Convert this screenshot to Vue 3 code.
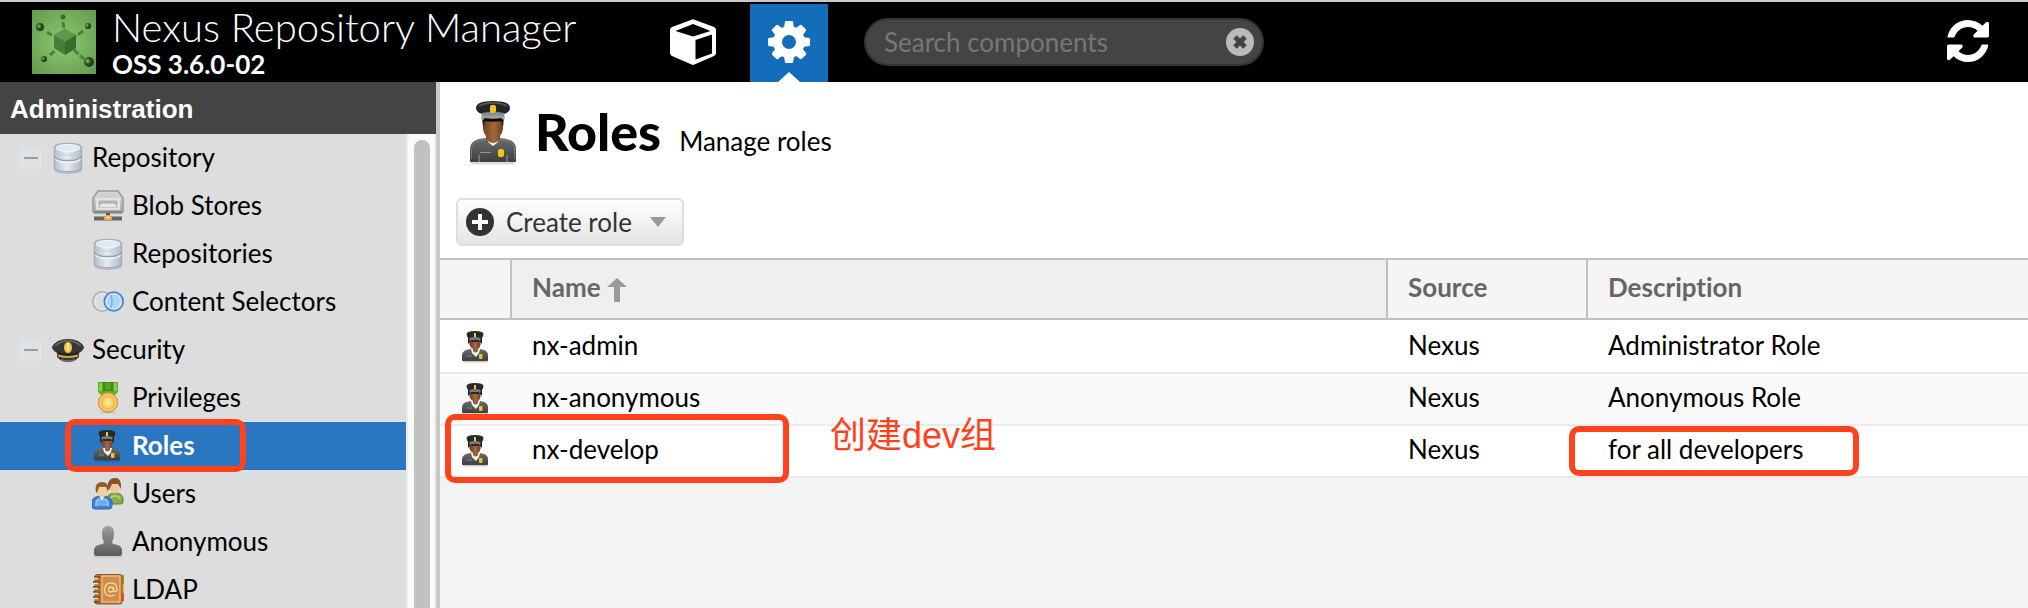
<script setup>
import { ref } from 'vue'

const query = ref('')
const nodes = [
  { label: 'Repository', icon: 'database', group: true },
  { label: 'Blob Stores', icon: 'drive' },
  { label: 'Repositories', icon: 'database' },
  { label: 'Content Selectors', icon: 'selectors' },
  { label: 'Security', icon: 'cap', group: true },
  { label: 'Privileges', icon: 'medal' },
  { label: 'Roles', icon: 'officer', selected: true },
  { label: 'Users', icon: 'users' },
  { label: 'Anonymous', icon: 'person' },
  { label: 'LDAP', icon: 'book' }
]
const roles = [
  { name: 'nx-admin', source: 'Nexus', description: 'Administrator Role' },
  { name: 'nx-anonymous', source: 'Nexus', description: 'Anonymous Role' },
  { name: 'nx-develop', source: 'Nexus', description: 'for all developers', marked: true }
]
</script>

<template>
  <svg class="defs" aria-hidden="true">
    <defs>
      <linearGradient id="g-metal" x1="0" x2="1" y1="0" y2="0">
        <stop offset="0" stop-color="#b4c0ca" /><stop offset=".45" stop-color="#e6ebf5" /><stop offset="1" stop-color="#aebbc4" />
      </linearGradient>
      <linearGradient id="g-drive" x1="0" x2="0" y1="0" y2="1">
        <stop offset="0" stop-color="#e2e2e2" /><stop offset="1" stop-color="#a8a8a8" />
      </linearGradient>
      <linearGradient id="g-uniform" x1="0" x2="0" y1="0" y2="1">
        <stop offset="0" stop-color="#6b6c6e" /><stop offset="1" stop-color="#3d3e40" />
      </linearGradient>
      <linearGradient id="g-person" x1="0" x2="0" y1="0" y2="1">
        <stop offset="0" stop-color="#9b9c9e" /><stop offset="1" stop-color="#5a5b5d" />
      </linearGradient>
      <linearGradient id="g-skin" x1="0" x2="1" y1="0" y2="0">
        <stop offset="0" stop-color="#6e4020" /><stop offset=".55" stop-color="#a5683e" /><stop offset="1" stop-color="#6a3d20" />
      </linearGradient>
      <linearGradient id="g-visor" x1="0" x2="0" y1="0" y2="1">
        <stop offset="0" stop-color="#77797c" /><stop offset="1" stop-color="#b5b7ba" />
      </linearGradient>
      <radialGradient id="g-gold" cx=".5" cy=".5" r=".6">
        <stop offset="0" stop-color="#fff0a0" /><stop offset="1" stop-color="#f2bd4a" />
      </radialGradient>
      <radialGradient id="g-logo" cx=".5" cy=".5" r=".7">
        <stop offset="0" stop-color="#8ecb70" /><stop offset="1" stop-color="#629a4c" />
      </radialGradient>
      <radialGradient id="g-ball" cx=".35" cy=".4" r=".6">
        <stop offset="0" stop-color="#9db58f" /><stop offset=".5" stop-color="#2f5528" /><stop offset="1" stop-color="#1d3b18" />
      </radialGradient>
    </defs>
    <symbol id="i-database" viewBox="0 0 32 32">
      <path d="M2.500 5.500Q3 1.500 16 1.500T29.500 5.500V27Q29 31 16 31T2.500 27Z" fill="url(#g-metal)" stroke="#a3b0ba" stroke-width="1.500" />
      <ellipse cx="16" cy="6" rx="12" ry="3.600" fill="#e2eaf1" stroke="#f4f7fa" />
      <path d="M3 15q2 3.500 13 3.500T29 15" fill="none" stroke="#93a2ae" stroke-width="1.500" />
      <path d="M3.500 17q2 3.500 12.500 3.500T28.500 17" fill="none" stroke="#f2f6fa" stroke-width="1.500" />
      <path d="M4 10q2 3 12 3t12-3" fill="none" stroke="#c2cdd6" />
      <path d="M4 27q3 2.500 12 2.500T28 27" fill="none" stroke="#9ba9b3" />
    </symbol>
    <symbol id="i-drive" viewBox="0 0 32 32">
      <path d="M6 1h20l5 7v13q0 2-2 2H3q-2 0-2-2V8Z" fill="url(#g-drive)" stroke="#969696" stroke-width="1.500" />
      <path d="M6.500 2.500h19l3.500 5H3Z" fill="#d0d0d0" />
      <path d="M5 9h22v10H5Z" fill="#cfcfcf" stroke="#ececec" stroke-width="1.500" />
      <path d="M8 16v-4h16v4" fill="none" stroke="#a8a8a8" stroke-width="1.500" />
      <path d="M8 15.500h16" stroke="#f4f4f4" stroke-width="1.500" />
      <path d="M2 22h28" stroke="#868686" stroke-width="2" />
      <path d="M2 28.500h28" stroke="#666" stroke-width="4" />
      <path d="M14 23h4v2h-4Z" fill="#555" />
      <path d="M14 25h4l2 2v3h-8v-3Z" fill="#eaa13e" />
      <path d="M14 27.500h4" stroke="#ffe39a" stroke-width="2" />
    </symbol>
    <symbol id="i-selectors" viewBox="0 0 32 32">
      <circle cx="10.500" cy="15.500" r="9.700" fill="#dcdcdc" stroke="#b0b0b0" stroke-width="1.600" />
      <circle cx="10.500" cy="15.500" r="7.700" fill="none" stroke="#efefef" />
      <circle cx="21.700" cy="15.500" r="9.400" fill="#aed5f5" stroke="#4a88c2" stroke-width="1.800" />
      <circle cx="21.700" cy="15.500" r="7.500" fill="none" stroke="#d6ebfb" stroke-width="1.200" />
      <path d="M18.500 9q3 6.500 0 13" fill="none" stroke="#7aaedb" stroke-width="1.500" />
    </symbol>
    <symbol id="i-cap" viewBox="0 0 32 32">
      <path d="M0 13Q4 5 16 5t16 8q0 3-5 6v4q-4 5-11 5T5 23v-4Q0 16 0 13Z" fill="#37373a" />
      <path d="M3 12Q8 7 16 7t13 5" fill="none" stroke="#6d6d70" stroke-width="1.500" />
      <path d="M6 18q10 4 20 0v4q-10 4-20 0Z" fill="#1e1e20" />
      <path d="M6 21.500q10 3 20 0" fill="none" stroke="#d3a93b" stroke-width="2.200" />
      <path d="M9 26q7 2 14 0" stroke="#77777a" stroke-width="1.500" fill="none" />
      <ellipse cx="16" cy="13.500" rx="4" ry="5.500" fill="#edc53e" />
      <path d="M16 9v8" stroke="#ffe98a" stroke-width="2" />
    </symbol>
    <symbol id="i-medal" viewBox="0 0 32 32">
      <path d="M6 0h20v10l-5 5H11l-5-5Z" fill="#62ab27" />
      <path d="M11 0h10v9H11Z" fill="#3f8a12" /><path d="M13 1h6v7h-6Z" fill="#57a123" />
      <path d="M7 1h3v8H7zM22 1h3v8h-3z" fill="#86c94e" />
      <circle cx="16" cy="20.500" r="9.500" fill="#f7d26b" stroke="#e29d43" stroke-width="1.500" />
      <circle cx="16" cy="20.500" r="6.500" fill="url(#g-gold)" stroke="#f0b84d" stroke-width="1.500" />
      <path d="M8 30.500h16" stroke="#000" stroke-opacity=".12" stroke-width="1.500" />
    </symbol>
    <symbol id="i-officer" viewBox="0 0 48 64">
      <path d="M2 61h44v2.500H2Z" fill="#000" opacity=".14" />
      <path d="M1 60V48q0-10 16-11h14q16 1 16 11v12q0 1-1 1H2q-1 0-1-1Z" fill="url(#g-uniform)" />
      <path d="M2.500 58V48q0-8 14-9.500M45.500 58V48q0-8-14-9.500" fill="none" stroke="#88898b" stroke-opacity=".7" />
      <path d="M17 37h14l-3 5-4 3-4-3Z" fill="#f1f1f1" />
      <path d="M14 18h20v10q-1 5-3 7v3q-7 8-14 0v-3q-2-2-3-7Z" fill="url(#g-skin)" />
      <path d="M13 16h22l-1 10-2-6H16l-2 6Z" fill="#17181a" />
      <path d="M7 7Q7 0 24 0t17 7q0 4-6 6H13Q7 11 7 7Z" fill="#242528" />
      <path d="M10 5Q15 2 24 2t14 3" fill="none" stroke="#595a5d" stroke-width="1.500" />
      <path d="M13 12q11-3 22 0l1 6q-12 3-24 0Z" fill="url(#g-visor)" />
      <path d="M15 18.500q9 1.500 18 0" stroke="#0c0d0e" stroke-width="3" fill="none" />
      <rect x="21" y="4" width="6" height="8" rx="2" fill="#f5c51c" />
      <rect x="29" y="48" width="6" height="8" rx="2" fill="#f5c51c" />
      <path d="M11 51.500h11M10 54v7M38 54v7" stroke="#929395" stroke-width="1.200" />
    </symbol>
    <symbol id="i-officer-small" viewBox="0 0 32 32">
      <path d="M3 30h25v1.500H3Z" fill="#000" opacity=".2" />
      <path d="M2 29v-5q0-5 9-6h9q8 1 8 6v5q0 1-1 1H3q-1 0-1-1Z" fill="url(#g-uniform)" />
      <path d="M11 18h9l-1 4-3 4-4-4Z" fill="#f6f6f6" />
      <path d="M9.500 8h11v6q-1 3-2.500 4v2q-2.500 3-5 0v-2q-2-1-3.500-4Z" fill="url(#g-skin)" />
      <path d="M8 6h14v7l-2-2v-3H10v3l-2 2Z" fill="#202123" />
      <path d="M6.500 3Q7 0 15 0t8.500 3q0 3-3 5H9.500Q6.500 6 6.500 3Z" fill="#28292b" />
      <path d="M9.500 7q5.500-2 11 0v2.500h-11Z" fill="#777b80" />
      <path d="M11 10h8" stroke="#101114" stroke-width="1.500" />
      <path d="M14 2h2v4h-2z" fill="#f5cb20" />
      <rect x="19" y="23" width="3.500" height="5" rx="1" fill="#f0c423" />
      <path d="M7 25h5" stroke="#88898b" />
    </symbol>
    <symbol id="i-users" viewBox="0 0 32 32">
      <path d="M15 26v-5q0-6 8-6t8 6v3q0 2-3 2Z" fill="#84ad48" stroke="#5c852a" />
      <path d="M18 22q1-4 5-4t5 3" fill="none" stroke="#b9d585" stroke-width="1.500" />
      <ellipse cx="22.500" cy="9" rx="5" ry="6.500" fill="#eec89a" />
      <path d="M16 10q-1-9 6-10t7 8v3l-3-5h-6l-3 6Z" fill="#875225" />
      <path d="M0 28v-4q0-6 10-6t10 6v4q0 3-3 3H3q-3 0-3-3Z" fill="#3f83d2" stroke="#2866b2" />
      <path d="M4 28v-3q0-3 4-4h4q4 1 4 4v3" fill="#6facec" stroke="#9ccaf5" stroke-width="1.500" />
      <ellipse cx="10" cy="13" rx="5" ry="6.500" fill="#f3d0a2" />
      <path d="M4 14q-2-10 6-10t6 10l-2-5H7l-2 6Z" fill="#905929" />
      <path d="M8 19h4l-2 3Z" fill="#fff" />
    </symbol>
    <symbol id="i-person" viewBox="0 0 32 32">
      <path d="M2 28v-4q0-5 9-6l1-2q-2-3-2-9 0-7 6-7t6 7q0 6-2 9l1 2q9 1 9 6v4q0 2-2 2H4q-2 0-2-2Z" fill="url(#g-person)" />
      <path d="M12 5q1-4 4-4t4 4" fill="none" stroke="#b0b1b3" stroke-opacity=".6" />
      <path d="M3 31h26" stroke="#000" stroke-opacity=".15" />
    </symbol>
    <symbol id="i-book" viewBox="0 0 32 32">
      <path d="M28 1h4v9h-4z" fill="#7ba232" /><path d="M28 10h4v9h-4z" fill="#f0b13b" /><path d="M28 19h4v8h-4z" fill="#e65a26" />
      <rect x="3" y="0.500" width="27" height="29.500" rx="2" fill="#c0732e" stroke="#9a561f" />
      <rect x="10" y="2" width="18" height="26" fill="#d08d49" stroke="#f1c993" stroke-width="1.200" />
      <path d="M2 3h6M1 8h7M1 13h7M1 18h7M1 23h7M2 28h6" stroke="#7b5534" stroke-width="2" />
      <path d="M1 4.500h5M1 9.500h5M1 14.500h5M1 19.500h5M1 24.500h5" stroke="#e8ded2" stroke-width="1.300" />
      <circle cx="19" cy="15.500" r="2.500" fill="none" stroke="#f8d4a0" stroke-width="1.300" />
      <path d="M21.500 13v4q2.500 1.500 3.500-1.500 0-6.500-6-6.500t-6.500 6.500q0 6.500 6.500 6.500 2 0 4-1" fill="none" stroke="#f8d4a0" stroke-width="1.300" />
    </symbol>
  </svg>

  <div class="app">
    <header class="topbar">
      <div class="brand">
        <svg class="logo" viewBox="0 0 64 64" aria-hidden="true">
          <rect width="64" height="64" fill="url(#g-logo)" />
          <path d="M31 12l1 7M15 22l6 4M51 21l-7 5M18 45l6-5M42 40l10 9" stroke="#44753a" stroke-opacity=".85" stroke-width="3" stroke-dasharray="6 2" />
          <path d="M33 19l11 6v13l-11 7-11-7V25Z" fill="#457c38" />
          <path d="M33 19l11 6-11 7-11-7Z" fill="#5c9a4b" />
          <path d="M33 32l11-7v13l-11 7Z" fill="#3a6b31" />
          <circle cx="31" cy="7" r="2.500" fill="#3c6434" />
          <circle cx="8" cy="17" r="4" fill="url(#g-ball)" />
          <circle cx="56" cy="16" r="3" fill="url(#g-ball)" />
          <circle cx="12" cy="49" r="3" fill="url(#g-ball)" />
          <circle cx="57" cy="52" r="5" fill="url(#g-ball)" />
        </svg>
        <div class="product">
          <div class="product-name">Nexus Repository Manager</div>
          <div class="version">OSS 3.6.0-02</div>
        </div>
      </div>
      <nav class="modes">
        <button class="mode" type="button" aria-label="Browse">
          <svg class="cube" viewBox="0 0 46 46" aria-hidden="true">
            <path d="M21.500 0.700q1.500-.8 3 0L44 8q2 1 2 3v23q0 2-2 3L25 45.300q-2 1-4 0L2 37q-2-1-2-3V11q0-2 2-3Z" fill="#fff" />
            <path d="M23 5l17.500 7L23 17.500 5.500 12ZM25.500 21L42 15.500V34.500L25.500 40.500Z" fill="#000" />
          </svg>
        </button>
        <button class="mode active" type="button" aria-label="Administration">
          <svg class="glyph" viewBox="128 128 1536 1536" aria-hidden="true">
            <path fill="#fff" d="M1152 896q0-106-75-181t-181-75-181 75-75 181 75 181 181 75 181-75 75-181zm512-109v222q0 12-8 23t-20 13l-185 28q-19 54-39 91 35 50 107 138 10 12 10 25t-9 23q-27 37-99 108t-94 71q-12 0-26-9l-138-108q-44 23-91 38-16 136-29 186-7 28-36 28h-222q-14 0-24.500-8.500t-11.500-21.500l-28-184q-49-16-90-37l-141 107q-10 9-25 9-14 0-25-11-126-114-165-168-7-10-7-23 0-12 8-23 15-21 51-66.500t54-70.500q-27-50-41-99l-183-27q-13-2-21-12.500t-8-23.500v-222q0-12 8-23t19-13l186-28q14-46 39-92-40-57-107-138-10-12-10-24 0-10 9-23 26-36 98.500-107.500t94.500-71.500q13 0 26 10l138 107q44-23 91-38 16-136 29-186 7-28 36-28h222q14 0 24.500 8.500t11.500 21.500l28 184q49 16 90 37l142-107q9-9 24-9 13 0 25 10 129 119 165 170 7 8 7 22 0 12-8 23-15 21-51 66.500t-54 70.500q26 50 41 98l183 28q13 2 21 12.500t8 23.500z" />
          </svg>
        </button>
      </nav>
      <div class="search">
        <input v-model="query" type="text" placeholder="Search components" aria-label="Search components" />
        <button class="clear" type="button" aria-label="Clear search" @click="query = ''">
          <svg viewBox="0 0 28 28" aria-hidden="true">
            <circle cx="14" cy="14" r="14" fill="#bababa" />
            <path d="M9 9l10 10M19 9L9 19" stroke="#444" stroke-width="5" />
          </svg>
        </button>
      </div>
      <button class="refresh" type="button" aria-label="Refresh">
        <svg class="glyph" viewBox="128 128 1536 1536" aria-hidden="true">
          <path fill="#fff" d="M1639 1056q0 5-1 7-64 268-268 434.500t-478 166.500q-146 0-282.500-55t-243.500-157l-129 129q-19 19-45 19t-45-19-19-45v-448q0-26 19-45t45-19h448q26 0 45 19t19 45-19 45l-137 137q71 66 161 102t187 36q134 0 250-65t186-179q11-17 53-117 8-23 30-23h192q13 0 22.500 9.500t9.500 22.500zm25-800v448q0 26-19 45t-45 19h-448q-26 0-45-19t-19-45 19-45l138-138q-148-137-349-137-134 0-250 65t-186 179q-11 17-53 117-8 23-30 23h-199q-13 0-22.500-9.500t-9.500-22.500v-7q65-268 270-434.500t480-166.500q146 0 284 55.500t245 156.500l130-129q19-19 45-19t45 19 19 45z" />
        </svg>
      </button>
    </header>

    <div class="body">
      <aside class="sidebar">
        <h2 class="sidebar-title">Administration</h2>
        <div class="tree-wrap">
          <ul class="tree">
            <li v-for="(node, i) in nodes" :key="i" class="node" :class="{ group: node.group, selected: node.selected }">
              <button v-if="node.group" class="toggle" type="button" :aria-label="'Collapse ' + node.label"></button>
              <svg class="icon" aria-hidden="true"><use :href="node.icon === 'officer' ? '#i-officer-small' : '#i-' + node.icon" /></svg>
              <a class="node-link" href="#">{{ node.label }}</a>
              <span v-if="node.selected" class="ring ring-node"></span>
            </li>
          </ul>
          <div class="track"><div class="thumb"></div></div>
        </div>
      </aside>

      <main class="content">
        <div class="heading">
          <svg class="officer" aria-hidden="true"><use href="#i-officer" /></svg>
          <h1>Roles</h1>
          <span class="subtitle">Manage roles</span>
        </div>
        <div class="toolbar">
          <button class="create" type="button">
            <svg class="plus" viewBox="0 0 28 28" aria-hidden="true">
              <circle cx="14" cy="14" r="14" fill="#333" />
              <path d="M14 6v16M6 14h16" stroke="#fff" stroke-width="4" />
            </svg>
            <span>Create role</span>
            <svg class="caret" viewBox="0 0 16 10" aria-hidden="true"><path d="M0 0h16L8 10Z" fill="#999" /></svg>
          </button>
        </div>
        <table class="grid">
          <colgroup><col class="c-icon" /><col /><col class="c-source" /><col class="c-desc" /></colgroup>
          <thead>
            <tr>
              <th aria-label="Type"></th>
              <th class="sorted">
                Name
                <svg class="sort" viewBox="0 0 20 24" aria-hidden="true"><path d="M10 0l10 9h-7v15H7V9H0Z" fill="#999" /></svg>
              </th>
              <th>Source</th>
              <th>Description</th>
            </tr>
          </thead>
          <tbody>
            <tr v-for="role in roles" :key="role.name">
              <td class="icon-cell">
                <svg class="icon" aria-hidden="true"><use href="#i-officer-small" /></svg>
                <span v-if="role.marked" class="ring ring-name"></span>
              </td>
              <td>{{ role.name }}<span v-if="role.marked" class="note">创建dev组</span></td>
              <td>{{ role.source }}</td>
              <td>{{ role.description }}<span v-if="role.marked" class="ring ring-desc"></span></td>
            </tr>
          </tbody>
        </table>
      </main>
    </div>
  </div>
</template>

<style>
body {
  margin: 0;
}
</style>

<style scoped>
.defs {
  position: absolute;
  width: 0;
  height: 0;
}
.app {
  display: flex;
  flex-direction: column;
  height: 100vh;
  overflow: hidden;
  font-family: Lato, "Liberation Sans", sans-serif;
  font-size: 26px;
  font-variant-ligatures: none;
  line-height: 32px;
  color: #000;
}
button {
  border: 0;
  padding: 0;
  background: none;
  font: inherit;
  cursor: pointer;
}
svg {
  display: block;
  flex: none;
}
.topbar {
  display: flex;
  align-items: stretch;
  flex: none;
  height: 80px;
  border-top: 2px solid #c6caca;
  background: #000;
  color: #fff;
}
.brand {
  display: flex;
  align-items: center;
  box-sizing: border-box;
  width: 654px;
  padding-left: 32px;
  gap: 16px;
}
.logo {
  width: 64px;
  height: 64px;
}
.product-name {
  font-size: 40px;
  line-height: 44px;
  font-weight: 300;
  white-space: nowrap;
}
.version {
  font-size: 26px;
  line-height: 30px;
  font-weight: 700;
}
.modes {
  display: flex;
  gap: 18px;
  padding-top: 2px;
}
.mode {
  position: relative;
  display: flex;
  align-items: center;
  justify-content: center;
  width: 78px;
  padding-bottom: 2px;
}
.mode.active {
  background: #136dbb;
}
.mode.active::after {
  content: "";
  position: absolute;
  left: 28px;
  bottom: 0;
  border: 11px solid transparent;
  border-top-width: 0;
  border-bottom: 10px solid #fff;
}
.cube {
  width: 46px;
  height: 46px;
}
.glyph {
  width: 42px;
  height: 42px;
}
.search {
  display: flex;
  align-items: center;
  align-self: center;
  box-sizing: border-box;
  width: 400px;
  height: 48px;
  margin-left: 36px;
  padding: 0 8px 0 18px;
  border: 2px solid #333;
  border-radius: 24px;
  background: #444;
}
.search input {
  flex: 1;
  min-width: 0;
  padding: 0;
  border: 0;
  outline: 0;
  background: none;
  color: #fff;
  font: inherit;
}
.search input::placeholder {
  color: #777;
  opacity: 1;
}
.clear svg {
  width: 28px;
  height: 28px;
}
.refresh {
  margin-left: auto;
  margin-right: 39px;
  padding-bottom: 2px;
}
.body {
  display: flex;
  flex: 1;
  min-height: 0;
}
.sidebar {
  display: flex;
  flex-direction: column;
  flex: none;
  width: 436px;
  border-right: 4px solid #c8c8c8;
}
.sidebar-title {
  flex: none;
  margin: 0;
  padding: 11px 10px 9px;
  background: #444;
  color: #fff;
  font: 700 26px/32px "Liberation Sans", sans-serif;
}
.tree-wrap {
  display: flex;
  flex: 1;
  min-height: 0;
  overflow: hidden;
}
.tree {
  flex: 1;
  margin: 0;
  padding: 0;
  list-style: none;
  background: #ddd;
}
.node {
  position: relative;
  display: flex;
  align-items: center;
  box-sizing: border-box;
  height: 48px;
  padding-left: 92px;
  gap: 8px;
}
.node.group {
  padding-left: 20px;
}
.node.selected {
  background: #2a76c0;
  font-weight: 700;
}
.node-link {
  padding-bottom: 2px;
  color: #000;
  text-decoration: none;
}
.selected .node-link {
  color: #fff;
}
.toggle {
  width: 22px;
  height: 22px;
  margin-right: 2px;
  background: linear-gradient(#9c9c9c, #9c9c9c) center / 14px 2px no-repeat #dde2e6;
}
.icon {
  width: 32px;
  height: 32px;
}
.track {
  box-sizing: border-box;
  width: 30px;
  padding: 6px 4px 0 6px;
  border: solid #ebebeb;
  border-width: 0 2px;
  background: #fafafa;
}
.thumb {
  width: 16px;
  height: 100%;
  border-radius: 8px 8px 0 0;
  background: #c1c1c1;
}
.content {
  flex: 1;
  min-width: 0;
  background: #f3f3f3;
}
.heading {
  display: flex;
  align-items: baseline;
  padding: 19px 0 0 29px;
  height: 96px;
  box-sizing: border-box;
  background: #fff;
}
.officer {
  width: 48px;
  height: 64px;
  align-self: flex-start;
}
h1 {
  margin: 0 18px 0 18px;
  font-size: 52px;
  line-height: 60px;
  font-weight: 900;
}
.toolbar {
  padding: 20px 16px 12px;
  background: #fff;
}
.create {
  display: flex;
  align-items: center;
  box-sizing: border-box;
  height: 48px;
  padding: 0 16px 0 8px;
  border: 2px solid #ddd;
  border-radius: 6px;
  background: linear-gradient(#fff, #e4e4e4);
  color: #333;
}
.plus {
  width: 28px;
  height: 28px;
  margin-right: 12px;
}
.caret {
  width: 16px;
  height: 10px;
  margin-left: 18px;
}
.grid {
  width: 100%;
  table-layout: fixed;
  border-spacing: 0;
}
.c-icon {
  width: 72px;
}
.c-source {
  width: 200px;
}
.c-desc {
  width: 440px;
}
th {
  box-sizing: border-box;
  height: 62px;
  padding: 0 20px 4px;
  border: solid #c0c0c0;
  border-width: 2px 2px 2px 0;
  background: #f5f5f5;
  color: #666;
  font-weight: 700;
  text-align: left;
}
th:last-child {
  border-right: 0;
}
th.sorted {
  background: #efefef;
}
.sort {
  display: inline-block;
  width: 20px;
  height: 24px;
  vertical-align: middle;
}
td {
  position: relative;
  box-sizing: border-box;
  height: 52px;
  padding: 0 20px 4px;
  border-bottom: 2px solid #ebebeb;
  background: #fff;
}
.icon-cell {
  padding-bottom: 0;
}
tbody tr:first-child td {
  height: 54px;
  border-top: 2px solid #fff;
}
tbody tr:nth-child(even) td {
  background: #fafafa;
}
.ring {
  position: absolute;
  z-index: 1;
  box-sizing: border-box;
  border: 6px solid #ff411c;
  border-radius: 10px;
  pointer-events: none;
}
.ring-node {
  left: 65px;
  top: -3px;
  width: 181px;
  height: 53px;
}
.ring-name {
  left: 5px;
  top: -12px;
  width: 344px;
  height: 69px;
}
.ring-desc {
  left: -19px;
  top: 0;
  width: 290px;
  height: 50px;
}
.note {
  position: absolute;
  left: 318px;
  top: -12px;
  color: #ff411c;
  font: 36px/44px "Liberation Sans", "Noto Sans CJK SC", sans-serif;
  white-space: nowrap;
}
</style>
